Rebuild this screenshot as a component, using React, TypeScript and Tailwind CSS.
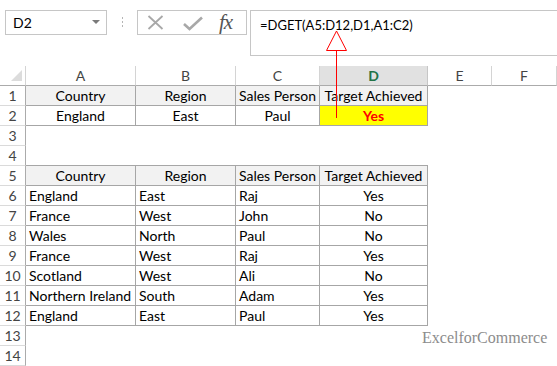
import React from "react";

const TB = "border-[#a6a6a6]";

type Row = {
  kind: "hdr" | "row2" | "empty" | "bottom" | "data";
  cells?: string[];
};

const rows: Row[] = [
  { kind: "hdr", cells: ["Country", "Region", "Sales Person", "Target Achieved"] },
  { kind: "row2", cells: ["England", "East", "Paul", "Yes"] },
  { kind: "empty" },
  { kind: "bottom" },
  { kind: "hdr", cells: ["Country", "Region", "Sales Person", "Target Achieved"] },
  { kind: "data", cells: ["England", "East", "Raj", "Yes"] },
  { kind: "data", cells: ["France", "West", "John", "No"] },
  { kind: "data", cells: ["Wales", "North", "Paul", "No"] },
  { kind: "data", cells: ["France", "West", "Raj", "Yes"] },
  { kind: "data", cells: ["Scotland", "West", "Ali", "No"] },
  { kind: "data", cells: ["Northern Ireland", "South", "Adam", "Yes"] },
  { kind: "data", cells: ["England", "East", "Paul", "Yes"] },
  { kind: "empty" },
  { kind: "empty" },
];

const cols = ["A", "B", "C", "D", "E", "F"];

function TableCells({ row }: { row: Row }) {
  const out: React.ReactNode[] = [];
  for (let c = 0; c < 6; c++) {
    let cls = "h-[20px] flex items-center whitespace-nowrap overflow-hidden text-[14px]";
    let content: React.ReactNode = null;
    if (c < 4 && row.cells) {
      const txt = row.cells[c];
      if (row.kind === "hdr") {
        cls += " text-black justify-center bg-[#f2f2f2] border-r border-b " + TB;
        content = txt;
      } else if (row.kind === "row2") {
        if (c === 3) {
          cls += " justify-center bg-[#ffff00] border-r border-b font-bold text-[#ff0000] " + TB;
        } else {
          cls += " text-black justify-center border-r border-b " + TB;
        }
        content = txt;
      } else {
        if (c === 3) {
          cls += " text-black justify-center border-r border-b " + TB;
        } else {
          cls += " text-black justify-start pl-[3px] border-r border-b " + TB;
        }
        content = txt;
      }
    } else if (c < 4 && row.kind === "bottom") {
      cls += " border-b " + TB;
    }
    out.push(
      <div key={c} className={cls}>
        {content}
      </div>
    );
  }
  return <>{out}</>;
}

export default function App() {
  return (
    <div className="relative w-[557px] h-[366px] bg-white overflow-hidden font-['Lato',sans-serif]">
      {/* toolbar */}
      <div className="flex items-start pt-[10px] pl-[5px] h-[56px]">
        <div className="w-[102px] h-[25px] border border-[#c6c6c6] flex items-center justify-between pl-[7px] pr-[6px] text-[14px] text-black">
          <span>D2</span>
          <svg width="8" height="5" viewBox="0 0 8 5">
            <polygon points="0,0 8,0 4,4" fill="#7a7a7a" />
          </svg>
        </div>
        <div className="w-[30px] h-[25px] flex items-center justify-center">
          <svg width="3" height="11" viewBox="0 0 3 11">
            <rect x="1" y="0" width="1" height="2" fill="#b5b5b5" />
            <rect x="1" y="4" width="1" height="2" fill="#b5b5b5" />
            <rect x="1" y="8" width="1" height="2" fill="#b5b5b5" />
          </svg>
        </div>
        <div className="w-[110px] h-[25px] border border-[#c6c6c6] flex items-center pl-[9px]">
          <svg width="17" height="15" viewBox="0 0 17 15">
            <path d="M1.5 1 L15.5 14 M15.5 1 L1.5 14" stroke="#a8a8a8" strokeWidth="1.8" fill="none" />
          </svg>
          <svg className="ml-[19px] mt-[2px]" width="20" height="15" viewBox="0 0 20 15">
            <path d="M1 8 L6.5 13 L19 1.5" stroke="#a8a8a8" strokeWidth="2.6" fill="none" />
          </svg>
          <span className="ml-[16px] font-['Liberation_Serif',serif] italic text-[21px] leading-none text-[#555] tracking-[-1px]">
            fx
          </span>
        </div>
        <div className="ml-[3px] flex-1 h-[46px] border-l border-t border-b border-[#c6c6c6] pl-[9px] pt-[5px] text-[13px] text-black">
          =DGET(A5:D12,D1,A1:C2)
        </div>
      </div>

      {/* grid */}
      <div className="mt-[10px] grid grid-cols-[26px_110px_100px_84px_108px_64px_65px] grid-rows-[repeat(15,20px)]">
        <div className="h-[20px] border-r border-b border-r-[#d4d4d4] border-b-[#ababab] relative">
          <svg className="absolute left-[11px] top-[4px]" width="11" height="11" viewBox="0 0 11 11">
            <polygon points="11,0 11,11 0,11" fill="#dcdcdc" />
          </svg>
        </div>
        {cols.map((c) => (
          <div
            key={c}
            className={
              c === "D"
                ? "h-[20px] flex items-center justify-center border-r border-b border-r-[#c6c6c6] border-b-[#ababab] bg-[#e1e1e1] text-[14px] font-bold text-[#217346]"
                : "h-[20px] flex items-center justify-center border-r border-b border-r-[#d4d4d4] border-b-[#ababab] text-[14px] text-[#444]"
            }
          >
            {c}
          </div>
        ))}
        {rows.map((row, i) => (
          <React.Fragment key={i}>
            <div className="h-[20px] flex items-center justify-center border-r border-b border-r-[#ababab] border-b-[#dadada] text-[14px] text-[#444]">
              {i + 1}
            </div>
            <TableCells row={row} />
          </React.Fragment>
        ))}
      </div>

      {/* watermark */}
      <div className="absolute left-[422px] top-[330px] font-['Liberation_Serif',serif] text-[16px] text-[#8c8c8c] leading-none">
        ExcelforCommerce
      </div>

      {/* red arrow */}
      <svg className="absolute left-0 top-0 pointer-events-none" width="557" height="366" viewBox="0 0 557 366">
        <polygon points="336.5,31 326.5,50.5 346.5,50.5" fill="white" stroke="#ff0000" strokeWidth="1" />
        <line x1="336.5" y1="50.5" x2="336.5" y2="118" stroke="#ff0000" strokeWidth="1" />
      </svg>
    </div>
  );
}
